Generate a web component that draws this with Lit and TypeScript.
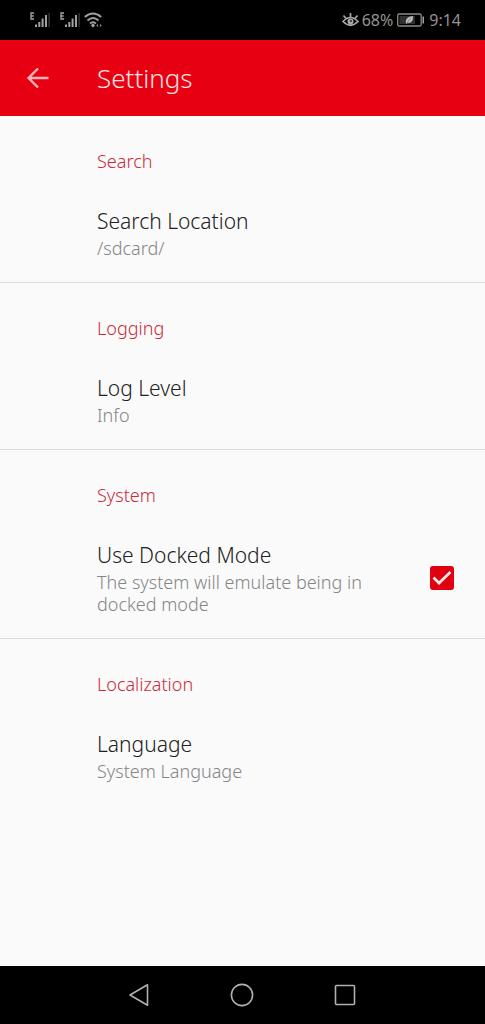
import { LitElement, html, css, svg } from "lit";
import { customElement, property, state } from "lit/decorators.js";

@customElement("status-bar")
class StatusBar extends LitElement {
  static styles = css`
    :host {
      display: flex;
      justify-content: space-between;
      align-items: center;
      height: 40px;
      padding: 0 24px 0 28px;
      background: #000;
      color: #939393;
      font-size: 16px;
      line-height: 24px;
    }
    .group { display: flex; align-items: center; }
    .radios { gap: 2px; }
    .signals { gap: 6px; }
    .info { gap: 3px; }
    svg { display: block; }
    .info span { font-weight: 400; }
  `;

  private signal() {
    return html`<svg width="24" height="20" viewBox="0 0 24 20" aria-hidden="true">
      ${svg`
        <path d="M6 3H3V9H6M3 6H5.700" fill="none" stroke="#a8a8a8" stroke-width="1.300"/>
        <path d="M7 14.500h2v2.500H7zM10.300 12h2v5h-2zM13.600 8.500h2v8.500h-2zM17 5h2v12h-2z" fill="#a0a0a0"/>
        <path d="M20.300 3h1.700v14h-1.700z" fill="#2c2c2c"/>`}
    </svg>`;
  }

  render() {
    return html`
      <div class="group radios">
        <div class="group signals">${this.signal()} ${this.signal()}</div>
        <svg width="20" height="20" viewBox="0 0 20 20" aria-hidden="true">
          <g fill="none" stroke="#a0a0a0" stroke-width="1.900">
            <path d="M.8 7Q9 0 17.200 7" />
            <path d="M3.500 10.500Q9 5.500 14.500 10.500" />
            <path d="M6 13.500Q9 10.800 12 13.500" />
          </g>
          <circle cx="9" cy="15.500" r="1.700" fill="#a0a0a0" />
          <path d="M12.200 15.500l1.900-2v4zM17.800 15.500l-1.900-2v4z" fill="#777" />
        </svg>
      </div>
      <div class="group info">
        <svg width="17" height="18" viewBox="0 0 17 18" aria-hidden="true">
          <g fill="none" stroke="#a8a8a8" stroke-width="1.700">
            <path d="M1 10.500Q8.500 2.500 16 10.500Q8.500 18 1 10.500Z" />
            <path d="M1.500 4.500L4 7.500M8.500 2V6.500M15.500 4.500L13 7.500" />
          </g>
          <circle cx="8.500" cy="10.500" r="3" fill="#a8a8a8" />
          <circle cx="9" cy="10" r="1" fill="#222" />
        </svg>
        <span>68%</span>
        <svg width="30" height="16" viewBox="0 0 30 16" aria-hidden="true">
          <rect x="1.700" y="2" width="23.500" height="12" rx="1.500" fill="none" stroke="#8a8a8a" stroke-width="1.300" />
          <path d="M3.500 4H19V12H3.500z" fill="#303030" />
          <path d="M10 12Q8.500 4.500 17 4Q17.500 11.500 11.500 11Z" fill="#bdbdbd" />
          <path d="M10.500 11.500L14.500 6.500" stroke="#555" stroke-width=".6" />
          <path d="M26.500 4.500h1.500v7h-1.500z" fill="#a0a0a0" />
        </svg>
        <span>9:14</span>
      </div>
    `;
  }
}

@customElement("app-bar")
class AppBar extends LitElement {
  @property() heading = "";

  static styles = css`
    :host {
      display: flex;
      align-items: center;
      height: 76px;
      background: #e70012;
      color: #ffe3e3;
    }
    .back {
      box-sizing: border-box;
      width: 97px;
      height: 76px;
      padding: 0 0 0 25px;
      border: 0;
      background: none;
      cursor: pointer;
    }
    .back svg { display: block; }
    h1 { margin: 0; font-size: 26px; line-height: 36px; font-weight: 300; }
  `;

  render() {
    return html`
      <button class="back" aria-label="Navigate up">
        <svg width="26" height="26" viewBox="0 0 26 26">
          <path d="M23.500 13H3.500M13 3.500L3.500 13L13 22.500" fill="none" stroke="#ffb3b8" stroke-width="2.400" />
        </svg>
      </button>
      <h1>${this.heading}</h1>
    `;
  }
}

interface Preference {
  category: string;
  title: string;
  summary: string;
  toggle?: boolean;
}

const PREFERENCES: Preference[] = [
  { category: "Search", title: "Search Location", summary: "/sdcard/" },
  { category: "Logging", title: "Log Level", summary: "Info" },
  { category: "System", title: "Use Docked Mode", summary: "The system will emulate being in docked mode", toggle: true },
  { category: "Localization", title: "Language", summary: "System Language" },
];

@customElement("preference-section")
class PreferenceSection extends LitElement {
  @property({ attribute: false }) pref!: Preference;
  @state() private checked = true;

  static styles = css`
    :host { display: block; }
    h2 {
      margin: 0;
      padding: 31px 24px 16px 97px;
      color: #cb2a3c;
      font-size: 18px;
      line-height: 28px;
      font-weight: 300;
    }
    .row {
      box-sizing: border-box;
      display: flex;
      align-items: center;
      justify-content: space-between;
      width: 100%;
      padding: 16px 31px 23px 97px;
      border: 0;
      background: none;
      font: inherit;
      text-align: left;
      cursor: pointer;
    }
    .text { display: flex; flex-direction: column; gap: 2px; }
    .toggle .text { max-width: 290px; }
    .title { color: #212121; font-size: 21px; line-height: 28px; }
    .summary { color: #858585; font-size: 18px; line-height: 22px; }
    .box { display: grid; flex: none; }
    .box > * { grid-area: 1 / 1; }
    input {
      appearance: none;
      width: 24px;
      height: 24px;
      margin: 0;
      border: 2px solid #757575;
      border-radius: 3px;
    }
    input:checked { border-color: #e0000f; background: #e0000f; }
    .tick { width: 24px; height: 24px; pointer-events: none; }
    .tick path { fill: none; stroke: #ffeaea; stroke-width: 2.700; }
    input:not(:checked) + .tick { visibility: hidden; }
  `;

  private onChange(e: Event) {
    this.checked = (e.target as HTMLInputElement).checked;
  }

  render() {
    const p = this.pref;
    const text = html`<span class="text">
      <span class="title">${p.title}</span>
      <span class="summary">${p.summary}</span>
    </span>`;
    return html`
      <h2>${p.category}</h2>
      ${p.toggle
        ? html`<label class="row toggle">
            ${text}
            <span class="box">
              <input type="checkbox" .checked=${this.checked} @change=${this.onChange} />
              <svg class="tick" viewBox="0 0 24 24" aria-hidden="true"><path d="M3.500 11.500L9 17L20.500 6" /></svg>
            </span>
          </label>`
        : html`<button class="row">${text}</button>`}
    `;
  }
}

@customElement("navigation-bar")
class NavigationBar extends LitElement {
  static styles = css`
    :host {
      display: grid;
      grid-template-columns: repeat(3, 103px);
      justify-content: center;
      height: 58px;
      padding-right: 1px;
      background: #000;
    }
    button { display: grid; place-items: center; padding: 0; border: 0; background: none; cursor: pointer; }
    svg { display: block; fill: none; stroke: #b0b0b0; stroke-width: 1.600; stroke-linejoin: round; }
  `;

  render() {
    return html`
      <button aria-label="Back">
        <svg width="24" height="24" viewBox="0 0 24 24"><path d="M3 12L20.500 1.800V22.200Z" /></svg>
      </button>
      <button aria-label="Home">
        <svg width="24" height="24" viewBox="0 0 24 24"><circle cx="12" cy="12" r="10.600" /></svg>
      </button>
      <button aria-label="Recent apps">
        <svg width="24" height="24" viewBox="0 0 24 24"><rect x="2.500" y="2.500" width="19" height="19" rx="1" /></svg>
      </button>
    `;
  }
}

@customElement("app-root")
class AppRoot extends LitElement {
  static styles = css`
    :host {
      display: flex;
      flex-direction: column;
      min-height: 100vh;
      background: #fafafa;
      font-family: "Noto Sans", "Open Sans", sans-serif;
      font-weight: 300;
    }
    main { flex: 1; }
    preference-section + preference-section { border-top: 1px solid #dcdcdc; }
  `;

  render() {
    return html`
      <status-bar></status-bar>
      <app-bar heading="Settings"></app-bar>
      <main>
        ${PREFERENCES.map((p) => html`<preference-section .pref=${p}></preference-section>`)}
      </main>
      <navigation-bar></navigation-bar>
    `;
  }
}
